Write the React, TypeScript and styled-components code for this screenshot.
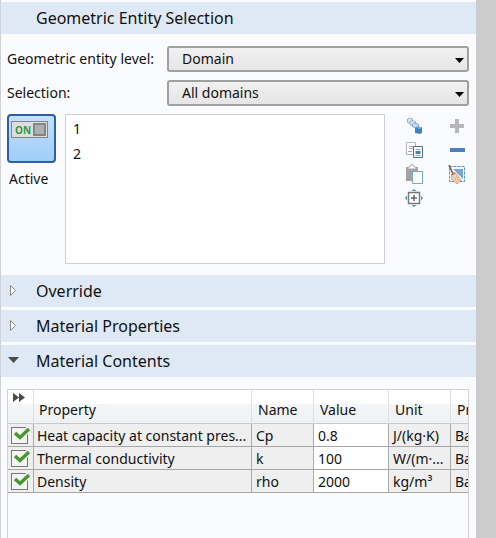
import React, { useState } from "react";
import styled, { createGlobalStyle } from "styled-components";

const GlobalStyle = createGlobalStyle`
  *, *::before, *::after { box-sizing: border-box; }
  body {
    margin: 0;
    background: #cccccc;
    color: #111;
    font: 14px/20px "Noto Sans", "Open Sans", sans-serif;
  }
  button, select, input { font: inherit; color: inherit; margin: 0; }
`;

const Page = styled.div`
  display: flex;
  min-height: 100vh;
  padding-right: 20px;
`;

const Panel = styled.main`
  flex: 1;
  min-width: 0;
  display: flex;
  flex-direction: column;
  gap: 3px;
  padding-top: 2px;
  border-left: 1px solid #d0d1d6;
  background: #fafbff;
`;

const SectionHeader = styled.h2`
  margin: 0;
  background: #dfe9f5;
  font-weight: 400;
`;

const SectionToggle = styled.button`
  display: grid;
  grid-template-columns: 28px 1fr;
  align-items: center;
  width: 100%;
  height: 32px;
  padding: 0 7px;
  border: 0;
  background: none;
  text-align: left;
  font-size: 16px;
  line-height: 24px;
`;

const Form = styled.div`
  display: grid;
  grid-template-columns: 160px 1fr;
  row-gap: 8px;
  align-items: center;
  padding: 9px 7px 8px 6px;
`;

const SelectBox = styled.div`
  position: relative;
  svg {
    position: absolute;
    right: 5px;
    top: 12px;
    pointer-events: none;
  }
`;

const Select = styled.select`
  display: block;
  width: 100%;
  height: 26px;
  padding: 0 24px 1px 13px;
  appearance: none;
  border: 2px solid #a0a0a0;
  border-radius: 3px;
  background: linear-gradient(#f1f1f1, #e6e6e6);
`;

const SelectionArea = styled.div`
  display: grid;
  grid-template-columns: 48px minmax(0, 1fr) 74px;
  column-gap: 10px;
  padding: 0 7px 8px 6px;
`;

const ActiveColumn = styled.div`
  display: flex;
  flex-direction: column;
  gap: 6px;
`;

const ActiveLabel = styled.span`
  padding-left: 2px;
`;

const ActiveButton = styled.button`
  display: flex;
  align-items: flex-start;
  width: 49px;
  height: 49px;
  padding: 5px 0 0 2px;
  border: 2px solid #2e5fa6;
  border-radius: 4px;
  background: linear-gradient(#c3e1fd, #9fcdf8);
`;

const Switch = styled.span`
  display: flex;
  align-items: center;
  justify-content: space-between;
  width: 37px;
  height: 17px;
  padding: 0 1px 0 3px;
  border: 1px solid #858585;
  background: #dedede;
  color: #2d9b48;
  font: bold 10px/14px "Open Sans", sans-serif;
`;

const Knob = styled.span`
  width: 13px;
  height: 13px;
  border: 2px solid #858585;
  background: #b0b0b0;
`;

const EntityList = styled.ul`
  height: 150px;
  margin: 0;
  padding: 1px 7px;
  border: 1px solid #d0d0d4;
  background: #fff;
  list-style: none;
  line-height: 25px;
`;

const Tools = styled.div`
  display: grid;
  grid-template-columns: 24px 24px;
  grid-auto-rows: 24px;
  column-gap: 19px;
  justify-content: end;
  align-content: start;
`;

const ToolButton = styled.button`
  display: grid;
  place-items: center;
  padding: 0;
  border: 0;
  background: none;
`;

const TableFrame = styled.div`
  flex: 1;
  overflow: hidden;
  margin: 9px 7px 0 6px;
  border: 1px solid #d0d0d4;
  border-bottom: 0;
`;

const Table = styled.table`
  width: 100%;
  table-layout: fixed;
  border-collapse: separate;
  border-spacing: 0;
`;

const Col = styled.col<{ $width?: number }>`
  width: ${(p) => (p.$width ? `${p.$width}px` : "auto")};
`;

const HeadCell = styled.th`
  height: 34px;
  padding: 6px 0 0 6px;
  overflow: hidden;
  border-right: 1px solid #dedfe2;
  border-bottom: 1px solid #c8c8cb;
  background: linear-gradient(#fff 0 14px, #f5f6f7 14px, #f0f1f3);
  font-weight: 400;
  text-align: left;
  white-space: nowrap;
  &:first-child { padding: 2px 0 0 5px; vertical-align: top; line-height: 10px; }
  &:nth-child(2) { padding-left: 5px; }
  &:last-child { border-right: 0; }
`;

const Cell = styled.td<{ $editable?: boolean }>`
  height: 23px;
  padding: 1px 0 0 4px;
  overflow: hidden;
  border-right: 1px solid #aaaaaa;
  border-bottom: 1px solid #a6a6a6;
  background: ${(p) => (p.$editable ? "#fff" : "#efefef")};
  white-space: nowrap;
  &:first-child { padding: 1px 0 0 3px; }
  &:nth-child(2) { padding-left: 3px; }
  &:last-child { border-right: 0; }
`;

const CheckLabel = styled.label`
  position: relative;
  display: block;
  width: 20px;
  height: 18px;
  svg { position: absolute; left: 2px; top: 0; pointer-events: none; }
`;

const CheckBox = styled.input`
  display: block;
  width: 17px;
  height: 17px;
  appearance: none;
  border: 1px solid #777;
  background: #f4f4f4;
  &:not(:checked) + svg { display: none; }
`;

const CaretDown = () => (
  <svg width="9" height="5" viewBox="0 0 9 5" aria-hidden="true">
    <path d="M0 0h9L4.500 5z" fill="#000" />
  </svg>
);

const Disclosure = ({ open }: { open: boolean }) =>
  open ? (
    <svg width="11" height="12" viewBox="0 0 11 12" aria-hidden="true">
      <path d="M0 2h11L5.500 8z" fill="#4a4a4a" />
    </svg>
  ) : (
    <svg width="11" height="12" viewBox="0 0 11 12" aria-hidden="true">
      <path d="M2.500 .5v10L7.500 5.500z" fill="#fff" stroke="#8b8b8b" />
    </svg>
  );

const ZoomChainIcon = () => (
  <svg width="18" height="18" viewBox="0 0 18 18" aria-hidden="true">
    <g stroke="#83a5ca" strokeWidth=".8">
      <path d="M2.500 2l2-1 3 1v3L5.500 6.500 2.500 5.500z" fill="#d7e3f2" />
      <path d="M5 4.500l2-1 3.500 1v3L9 9 5 8z" fill="#d7e3f2" />
      <path d="M7.500 7l2-1 4 1v3l-2 1-4-1z" fill="#c9d9ec" />
    </g>
    <path d="M10 11l2-1.500 5 1V15.500l-1.500 1.500L10 16z" fill="#3f80c0" />
    <path d="M10 11l2-1.500 5 1-1.500 1.500z" fill="#71a5d8" />
  </svg>
);

const CopyIcon = () => (
  <svg width="18" height="18" viewBox="0 0 18 18" aria-hidden="true">
    <path d="M1.500 1.500h9v12h-9z" fill="#fdfdfd" stroke="#b4b4b4" />
    <path d="M4 5.500h4M4 7.500h4M3 10.500h4" stroke="#aaa" />
    <path d="M8.500 5.500h9v11h-9z" fill="#fff" stroke="#44719e" />
    <path d="M10.500 8.500h5M10.500 14.500h5" stroke="#8aa9c9" />
    <path d="M10.500 10h5v3h-5z" fill="#4c7fb4" />
  </svg>
);

const PasteIcon = () => (
  <svg width="18" height="20" viewBox="0 0 18 20" aria-hidden="true">
    <path d="M1 3h12v14H1z" fill="#a3a3a3" />
    <path d="M3 5V3h2Q5.500 .5 7 .5T9 3h2v2z" fill="#fff" stroke="#aaa" />
    <path d="M7.500 7.500h10v12h-10z" fill="#fff" stroke="#78a8d8" />
  </svg>
);

const ZoomExtentsIcon = () => (
  <svg width="18" height="18" viewBox="0 0 18 18" aria-hidden="true">
    <path d="M3.500 3.500h11v11h-11z" fill="#fff" stroke="#777" strokeWidth="1.400" />
    <path d="M9 6v6M6 9h6" stroke="#666" strokeWidth="1.500" />
    <path d="M6.500 2L9 0l2.500 2zM6.500 16L9 18l2.500-2zM2 6.500L0 9l2 2.500zM16 6.500L18 9l-2 2.500z" fill="#4b8cc8" />
  </svg>
);

const PlusIcon = () => (
  <svg width="14" height="14" viewBox="0 0 14 14" aria-hidden="true">
    <path d="M7 0v14M0 7h14" stroke="#b7b7b7" strokeWidth="4" />
  </svg>
);

const MinusIcon = () => (
  <svg width="15" height="4" viewBox="0 0 15 4" aria-hidden="true">
    <path d="M0 0h15v4H0z" fill="#4a82bd" />
  </svg>
);

const ClearIcon = () => (
  <svg width="18" height="20" viewBox="0 0 18 20" aria-hidden="true">
    <path d="M1.500 2.500h15v15h-15z" fill="#f5faff" stroke="#5b91c8" strokeDasharray="3 1" />
    <path d="M5 5h10v10z" fill="#78a5d7" />
    <path d="M1 1l4 9" stroke="#766a5c" strokeWidth="1.800" />
    <path d="M3.500 10.500l3.500-2 6 7.500-3 3.500H8l-4-4z" fill="#f4d4ae" stroke="#bd9877" strokeWidth=".8" />
    <path d="M3.500 11l3.500-2" stroke="#c4604d" strokeWidth="1.200" />
    <path d="M6 13l3 5M8 12l3 5" stroke="#c3a27d" strokeWidth=".6" />
  </svg>
);

const CheckMark = () => (
  <svg width="18" height="15" viewBox="0 0 18 15" aria-hidden="true">
    <path d="M2 6L7 11L16.500 1" fill="none" stroke="#f2f2f2" strokeWidth="6" />
    <path d="M2 6L7 10.500L16 2" fill="none" stroke="#49962e" strokeWidth="3.400" />
  </svg>
);

const FastForward = () => (
  <svg width="12" height="9" viewBox="0 0 12 9" aria-hidden="true">
    <path d="M0 0l6 4.500L0 9zM6 0l6 4.500L6 9z" fill="#4a4a4a" />
  </svg>
);

const tools = [
  { label: "Create selection", Icon: ZoomChainIcon },
  { label: "Add", Icon: PlusIcon },
  { label: "Copy", Icon: CopyIcon },
  { label: "Remove", Icon: MinusIcon },
  { label: "Paste", Icon: PasteIcon },
  { label: "Clear", Icon: ClearIcon },
  { label: "Zoom to selection", Icon: ZoomExtentsIcon },
];

const properties = [
  { property: "Heat capacity at constant pres...", name: "Cp", value: "0.8", unit: "J/(kg·K)", group: "Ba" },
  { property: "Thermal conductivity", name: "k", value: "100", unit: "W/(m·...", group: "Ba" },
  { property: "Density", name: "rho", value: "2000", unit: "kg/m³", group: "Ba" },
];

function Section({ title, open }: { title: string; open?: boolean }) {
  return (
    <SectionHeader>
      <SectionToggle type="button" aria-expanded={open ?? true}>
        {open === undefined ? <span /> : <Disclosure open={open} />}
        <span>{title}</span>
      </SectionToggle>
    </SectionHeader>
  );
}

export default function App() {
  const [active, setActive] = useState(true);
  return (
    <>
      <GlobalStyle />
      <Page>
        <Panel>
          <Section title="Geometric Entity Selection" />
          <div>
            <Form>
              <label htmlFor="level">Geometric entity level:</label>
              <SelectBox>
                <Select id="level"><option>Domain</option></Select>
                <CaretDown />
              </SelectBox>
              <label htmlFor="selection">Selection:</label>
              <SelectBox>
                <Select id="selection"><option>All domains</option></Select>
                <CaretDown />
              </SelectBox>
            </Form>
            <SelectionArea>
              <ActiveColumn>
                <ActiveButton
                  type="button"
                  aria-pressed={active}
                  aria-labelledby="active-label"
                  onClick={() => setActive(!active)}
                >
                  <Switch>ON<Knob /></Switch>
                </ActiveButton>
                <ActiveLabel id="active-label">Active</ActiveLabel>
              </ActiveColumn>
              <EntityList>
                <li>1</li>
                <li>2</li>
              </EntityList>
              <Tools>
                {tools.map(({ label, Icon }) => (
                  <ToolButton key={label} type="button" aria-label={label}><Icon /></ToolButton>
                ))}
              </Tools>
            </SelectionArea>
          </div>
          <Section title="Override" open={false} />
          <Section title="Material Properties" open={false} />
          <Section title="Material Contents" open />
          <TableFrame>
            <Table>
              <colgroup>
                <Col $width={26} />
                <Col $width={218} />
                <Col $width={62} />
                <Col $width={75} />
                <Col $width={62} />
                <Col />
              </colgroup>
              <thead>
                <tr>
                  <HeadCell><FastForward /></HeadCell>
                  <HeadCell>Property</HeadCell>
                  <HeadCell>Name</HeadCell>
                  <HeadCell>Value</HeadCell>
                  <HeadCell>Unit</HeadCell>
                  <HeadCell>Pr</HeadCell>
                </tr>
              </thead>
              <tbody>
                {properties.map((row) => (
                  <tr key={row.name}>
                    <Cell>
                      <CheckLabel>
                        <CheckBox type="checkbox" defaultChecked aria-label={row.property} />
                        <CheckMark />
                      </CheckLabel>
                    </Cell>
                    <Cell>{row.property}</Cell>
                    <Cell>{row.name}</Cell>
                    <Cell $editable>{row.value}</Cell>
                    <Cell>{row.unit}</Cell>
                    <Cell>{row.group}</Cell>
                  </tr>
                ))}
              </tbody>
            </Table>
          </TableFrame>
        </Panel>
      </Page>
    </>
  );
}
